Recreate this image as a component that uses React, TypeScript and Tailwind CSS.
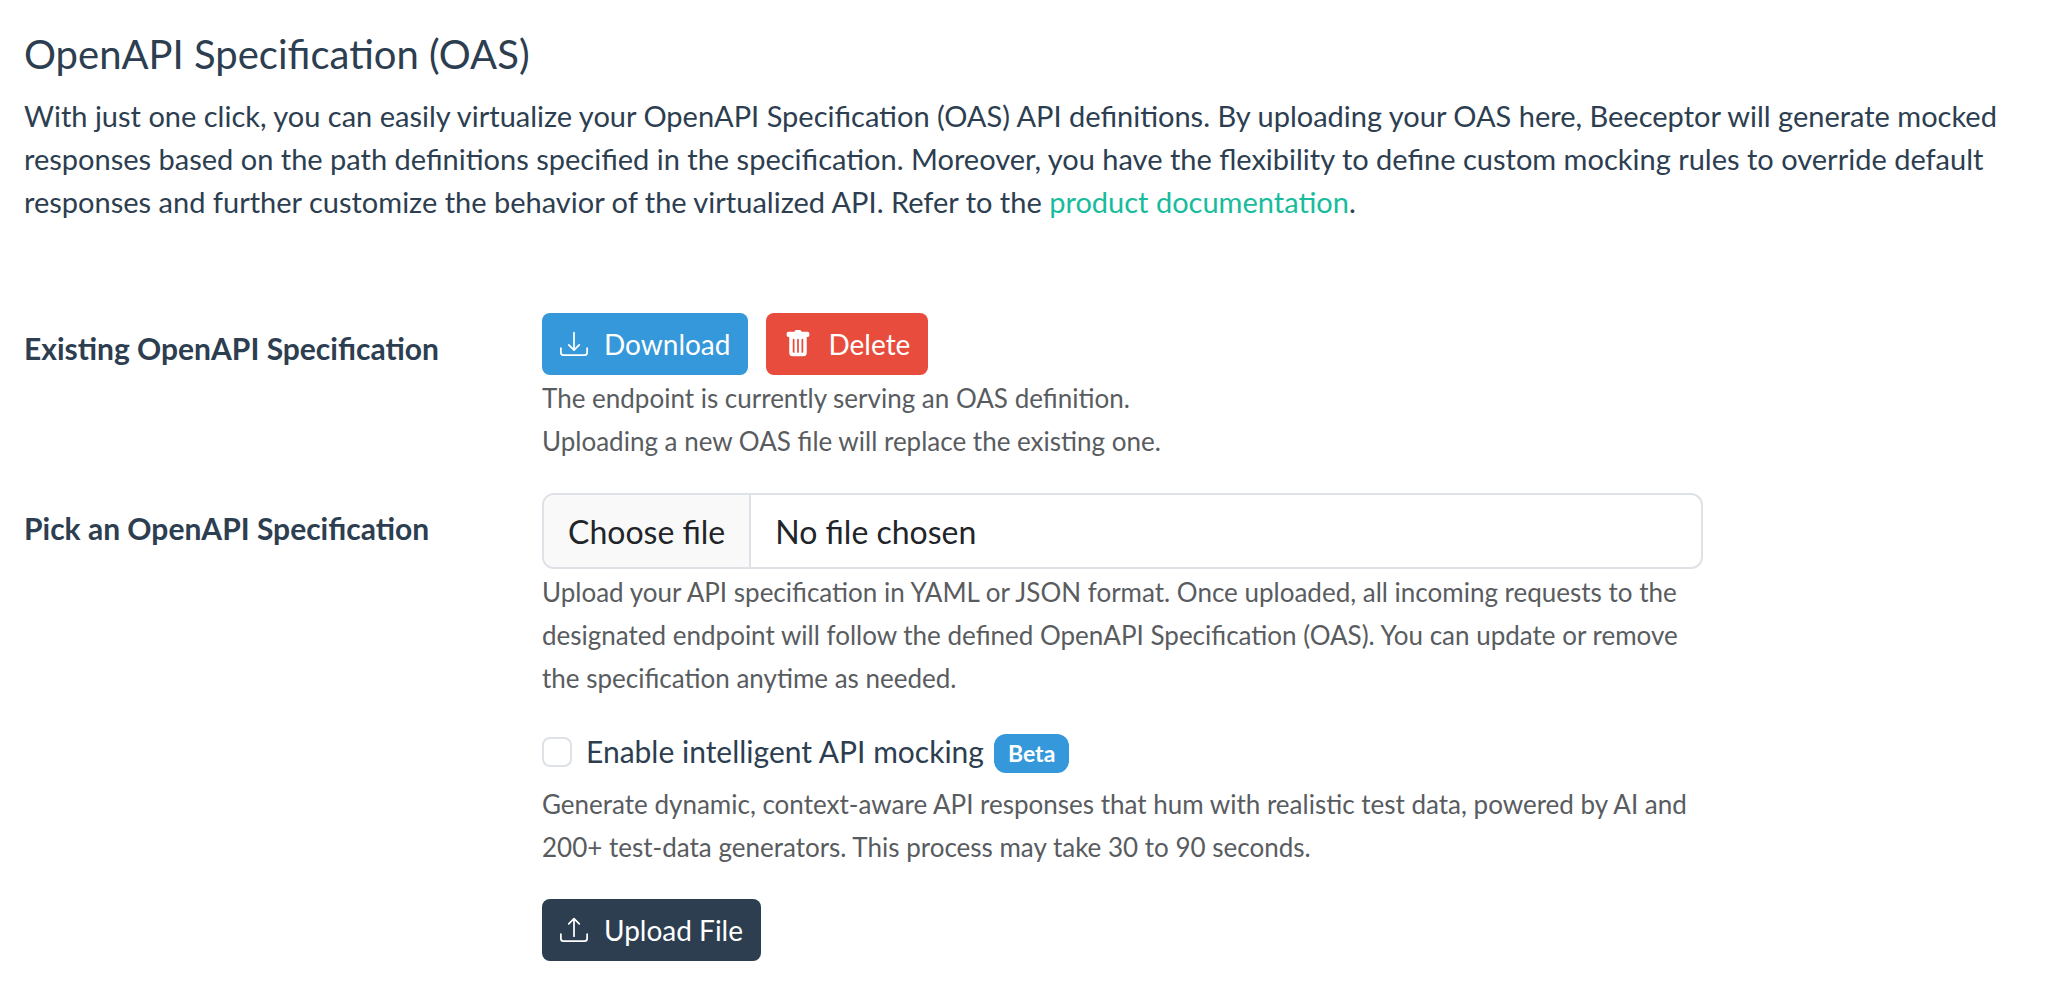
import React from 'react';

function DownloadIcon() {
  return (
    <svg className="w-7 h-7" viewBox="0 0 16 16" fill="currentColor" aria-hidden="true">
      <path d="M.5 9.900a.5.5 0 0 1 .5.5v2.500a1 1 0 0 0 1 1h12a1 1 0 0 0 1-1v-2.500a.5.5 0 0 1 1 0v2.500a2 2 0 0 1-2 2H2a2 2 0 0 1-2-2v-2.500a.5.5 0 0 1 .5-.5" />
      <path d="M7.646 11.854a.5.5 0 0 0 .708 0l3-3a.5.5 0 0 0-.708-.708L8.500 10.293V1.500a.5.5 0 0 0-1 0v8.793L5.354 8.146a.5.5 0 1 0-.708.708z" />
    </svg>
  );
}

function UploadIcon() {
  return (
    <svg className="w-7 h-7" viewBox="0 0 16 16" fill="currentColor" aria-hidden="true">
      <path d="M.5 9.900a.5.5 0 0 1 .5.5v2.500a1 1 0 0 0 1 1h12a1 1 0 0 0 1-1v-2.500a.5.5 0 0 1 1 0v2.500a2 2 0 0 1-2 2H2a2 2 0 0 1-2-2v-2.500a.5.5 0 0 1 .5-.5" />
      <path d="M7.646 1.146a.5.5 0 0 1 .708 0l3 3a.5.5 0 0 1-.708.708L8.500 2.707V11.500a.5.5 0 0 1-1 0V2.707L5.354 4.854a.5.5 0 1 1-.708-.708z" />
    </svg>
  );
}

function TrashIcon() {
  return (
    <svg className="w-7 h-7" viewBox="0 0 16 16" fill="currentColor" aria-hidden="true">
      <path d="M2.500 1a1 1 0 0 0-1 1v1a1 1 0 0 0 1 1H3v9a2 2 0 0 0 2 2h6a2 2 0 0 0 2-2V4h.5a1 1 0 0 0 1-1V2a1 1 0 0 0-1-1H10a1 1 0 0 0-1-1H7a1 1 0 0 0-1 1zm3 4a.5.5 0 0 1 .5.5v7a.5.5 0 0 1-1 0v-7a.5.5 0 0 1 .5-.5M8 5a.5.5 0 0 1 .5.5v7a.5.5 0 0 1-1 0v-7A.5.5 0 0 1 8 5m3 .5v7a.5.5 0 0 1-1 0v-7a.5.5 0 0 1 1 0" />
    </svg>
  );
}

function App() {
  return (
    <div className="min-h-screen bg-white pl-6 pr-5 pt-[30px] pb-5 font-[Lato,sans-serif] text-[30px] leading-[43px] text-[#2c3e50]">
      <h1 className="text-[40px] leading-[48px] mb-4">OpenAPI Specification (OAS)</h1>
      <p className="text-[29px]">
        With just one click, you can easily virtualize your OpenAPI Specification (OAS) API definitions. By uploading your OAS here, Beeceptor will generate mocked responses based on the path definitions specified in the specification. Moreover, you have the flexibility to define custom mocking rules to override default responses and further customize the behavior of the virtualized API. Refer to the{' '}
        <a href="#docs" className="text-[#18bc9c]">product documentation</a>.
      </p>

      <form className="mt-[90px] grid grid-cols-12 gap-x-12 gap-y-[30px]" onSubmit={(e) => e.preventDefault()}>
        {/* Existing spec */}
        <div className="col-span-3 pt-3.5 font-bold">Existing OpenAPI Specification</div>
        <div className="col-span-7">
          <div className="flex gap-[18px]">
            <button type="button" className="flex h-[62px] items-center gap-4 rounded-lg bg-[#3498db] px-[18px] text-[28px] text-white">
              <DownloadIcon />
              Download
            </button>
            <button type="button" className="flex h-[62px] items-center gap-4 rounded-lg bg-[#e74c3c] px-[18px] text-[28px] text-white">
              <TrashIcon />
              Delete
            </button>
          </div>
          <p className="mt-0.5 text-[26px] text-[#595c5f]">
            The endpoint is currently serving an OAS definition.
            <br />
            Uploading a new OAS file will replace the existing one.
          </p>
        </div>

        {/* New spec */}
        <label htmlFor="spec" className="col-span-3 col-start-1 pt-3.5 font-bold">Pick an OpenAPI Specification</label>
        <div className="col-span-7">
          <div className="relative">
            <input id="spec" type="file" className="peer sr-only" />
            <label htmlFor="spec" className="flex h-[76px] items-stretch overflow-hidden rounded-xl border-2 border-[#dee2e6] text-[32px] text-[#212529] peer-focus-visible:border-[#3498db]">
              <span className="flex items-center border-r-2 border-[#dee2e6] bg-[#f9f9f9] px-6">Choose file</span>
              <span className="flex items-center px-6">No file chosen</span>
            </label>
          </div>
          <p className="mt-0.5 text-[26px] text-[#595c5f]">
            Upload your API specification in YAML or JSON format. Once uploaded, all incoming requests to the designated endpoint will follow the defined OpenAPI Specification (OAS). You can update or remove the specification anytime as needed.
          </p>
          <div className="mt-[30px] flex items-center">
            <input id="smart" type="checkbox" className="size-[30px] appearance-none rounded-lg border-2 border-[#dee2e6] checked:bg-[#3498db]" />
            <label htmlFor="smart" className="ml-3.5">Enable intelligent API mocking</label>
            <span className="mt-1 ml-2.5 rounded-xl bg-[#3498db] px-[14px] text-[23px] leading-[39px] font-bold text-white">Beta</span>
          </div>
          <p className="mt-2.5 text-[26px] text-[#595c5f]">
            Generate dynamic, context-aware API responses that hum with realistic test data, powered by AI and 200+ test-data generators. This process may take 30 to 90 seconds.
          </p>
          <button type="submit" className="mt-[30px] flex h-[62px] items-center gap-4 rounded-lg bg-[#2c3e50] px-[18px] text-[28px] text-white">
            <UploadIcon />
            Upload File
          </button>
        </div>
      </form>
    </div>
  );
}

export default App;
